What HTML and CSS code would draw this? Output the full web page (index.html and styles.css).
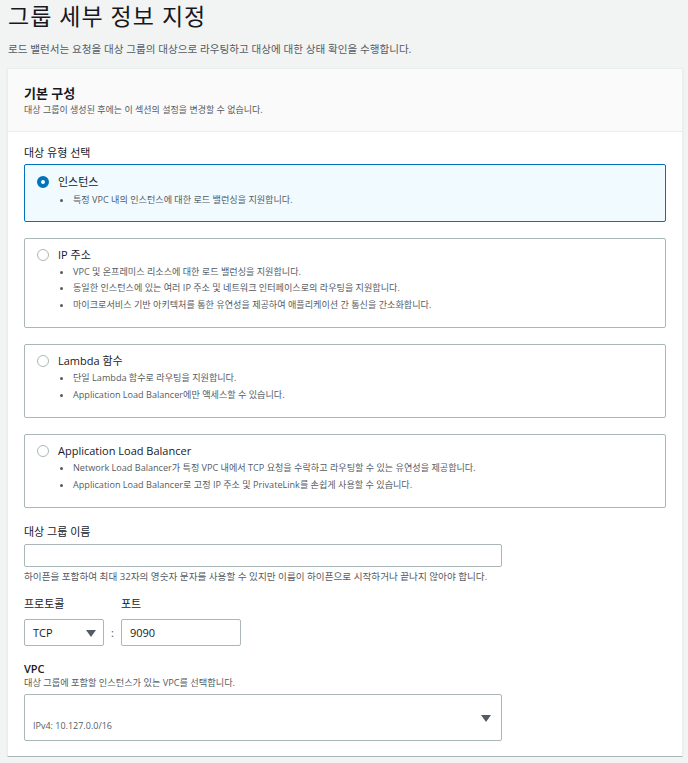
FILE: index.html
```html
<!DOCTYPE html>
<html lang="ko">
<head>
    <meta charset="UTF-8">
    <title>그룹 세부 정보 지정</title>
    <link rel="stylesheet" href="styles.css">
</head>
<body>

<h1 class="page-title">그룹 세부 정보 지정</h1>
<p class="page-desc">로드 밸런서는 요청을 대상 그룹의 대상으로 라우팅하고 대상에 대한 상태 확인을 수행합니다.</p>

<div class="card">
    <div class="card-header">
        <h2>기본 구성</h2>
        <p>대상 그룹이 생성된 후에는 이 섹션의 설정을 변경할 수 없습니다.</p>
    </div>

    <div class="card-body">
        <div class="field-label type-label">대상 유형 선택</div>

        <div class="tile selected">
            <div class="tile-title"><span class="radio checked"></span>인스턴스</div>
            <ul>
                <li>특정 VPC 내의 인스턴스에 대한 로드 밸런싱을 지원합니다.</li>
            </ul>
        </div>

        <div class="tile">
            <div class="tile-title"><span class="radio"></span>IP 주소</div>
            <ul>
                <li>VPC 및 온프레미스 리소스에 대한 로드 밸런싱을 지원합니다.</li>
                <li>동일한 인스턴스에 있는 여러 IP 주소 및 네트워크 인터페이스로의 라우팅을 지원합니다.</li>
                <li>마이크로서비스 기반 아키텍처를 통한 유연성을 제공하여 애플리케이션 간 통신을 간소화합니다.</li>
            </ul>
        </div>

        <div class="tile">
            <div class="tile-title"><span class="radio"></span>Lambda 함수</div>
            <ul>
                <li>단일 Lambda 함수로 라우팅을 지원합니다.</li>
                <li>Application Load Balancer에만 액세스할 수 있습니다.</li>
            </ul>
        </div>

        <div class="tile">
            <div class="tile-title"><span class="radio"></span>Application Load Balancer</div>
            <ul>
                <li>Network Load Balancer가 특정 VPC 내에서 TCP 요청을 수락하고 라우팅할 수 있는 유연성을 제공합니다.</li>
                <li>Application Load Balancer로 고정 IP 주소 및 PrivateLink를 손쉽게 사용할 수 있습니다.</li>
            </ul>
        </div>

        <div class="field name-field">
            <div class="field-label">대상 그룹 이름</div>
            <input type="text" class="text-input wide">
            <div class="hint">하이픈을 포함하여 최대 32자의 영숫자 문자를 사용할 수 있지만 이름이 하이픈으로 시작하거나 끝나지 않아야 합니다.</div>
        </div>

        <div class="proto-row">
            <div class="proto-col">
                <div class="field-label">프로토콜</div>
                <div class="select small">TCP<span class="caret"></span></div>
            </div>
            <span class="colon">:</span>
            <div class="proto-col">
                <div class="field-label">포트</div>
                <input type="text" class="text-input port" value="9090">
            </div>
        </div>

        <div class="field vpc-field">
            <div class="field-label vpc-label">VPC</div>
            <div class="hint top">대상 그룹에 포함할 인스턴스가 있는 VPC를 선택합니다.</div>
            <div class="select vpc">
                <span class="vpc-sub">IPv4: 10.127.0.0/16</span>
                <span class="caret"></span>
            </div>
        </div>
    </div>
</div>

</body>
</html>
```

FILE: styles.css
```css
body {
    margin: 0;
    padding: 0 5px 0 7px;
    background-color: #f2f3f3;
    color: #16191f;
    font-family: "Open Sans", "Noto Sans CJK KR", sans-serif;
    font-size: 10px;
}

.page-title {
    margin: 0;
    padding: 2px 0 0 1px;
    font-size: 23px;
    font-weight: 400;
    letter-spacing: 1px;
    line-height: 28px;
    color: #16191f;
}

.page-desc {
    margin: 11px 0 0 1px;
    font-size: 10.6px;
    line-height: 16px;
    color: #545b64;
}

.card {
    margin-top: 11px;
    background: #fff;
    border: 1px solid #eaeded;
    border-bottom-color: #aab7b8;
    box-shadow: 0 1px 1px rgba(0, 32, 64, 0.1);
}

.card-header {
    background: #fafafa;
    border-bottom: 1px solid #eaeded;
    padding: 14px 16px 14px 16px;
}

.card-header h2 {
    margin: 0;
    font-size: 13px;
    font-weight: 700;
    line-height: 20px;
}

.card-header p {
    margin: 0;
    font-size: 9px;
    line-height: 14px;
    color: #545b64;
}

.card-body {
    padding: 13px 16px 15px 16px;
}

.field-label {
    font-size: 11px;
    line-height: 16px;
    margin-bottom: 4px;
}

.field-label.type-label {
    margin-bottom: 3px;
}

.tile {
    border: 1px solid #aab7b8;
    border-radius: 2px;
    padding: 8px 12px 14px 12px;
    margin-bottom: 16px;
}

.tile.selected {
    background: #f1faff;
    border-color: #0073bb;
    padding: 9px 12px 12px 12px;
}

.tile-title {
    display: flex;
    align-items: center;
    font-size: 11px;
    line-height: 16px;
}

.radio {
    width: 10px;
    height: 10px;
    border: 1px solid #aab7b8;
    border-radius: 50%;
    margin-right: 9px;
    box-sizing: content-box;
}

.radio.checked {
    width: 4px;
    height: 4px;
    border: 4px solid #0073bb;
    background: #fff;
}

.tile ul {
    margin: 1px 0 0 0;
    padding: 0 0 0 36px;
    font-size: 9.1px;
    line-height: 16.5px;
    color: #545b64;
}

.tile.selected ul {
    margin-top: 2px;
}

.name-field {
    margin-top: 16px;
}

.text-input {
    display: block;
    box-sizing: border-box;
    border: 1px solid #aab7b8;
    border-radius: 2px;
    background: #fff;
    font-family: inherit;
    font-size: 11px;
    color: #16191f;
    padding: 0 8px;
    margin: 0;
    outline: none;
}

.text-input.wide {
    width: 478px;
    height: 23px;
}

.hint {
    margin-top: 3px;
    font-size: 9.6px;
    line-height: 14px;
    color: #545b64;
}

.hint.top {
    margin-top: -5px;
    margin-bottom: 4px;
    font-size: 9.2px;
}

.proto-row {
    display: flex;
    align-items: flex-end;
    margin-top: 12px;
}

.proto-col .field-label {
    margin-bottom: 7px;
}

.select {
    box-sizing: border-box;
    border: 1px solid #aab7b8;
    border-radius: 2px;
    background: #fff;
    position: relative;
    font-size: 11px;
    color: #16191f;
}

.select.small {
    width: 80px;
    height: 27px;
    line-height: 25px;
    padding-left: 8px;
}

.caret {
    position: absolute;
    right: 7px;
    top: 50%;
    margin-top: -3px;
    width: 0;
    height: 0;
    border-left: 5px solid transparent;
    border-right: 5px solid transparent;
    border-top: 7px solid #545b64;
}

.colon {
    width: 17px;
    text-align: center;
    font-size: 11px;
    line-height: 27px;
    color: #545b64;
}

.text-input.port {
    width: 120px;
    height: 27px;
}

.vpc-field {
    margin-top: 15px;
}

.vpc-label {
    font-weight: 600;
}

.select.vpc {
    width: 478px;
    height: 47px;
    display: flex;
    align-items: flex-end;
    padding: 0 8px 7px 8px;
}

.select.vpc .caret {
    right: 10px;
}

.vpc-sub {
    font-size: 9px;
    line-height: 14px;
    color: #545b64;
}
```
